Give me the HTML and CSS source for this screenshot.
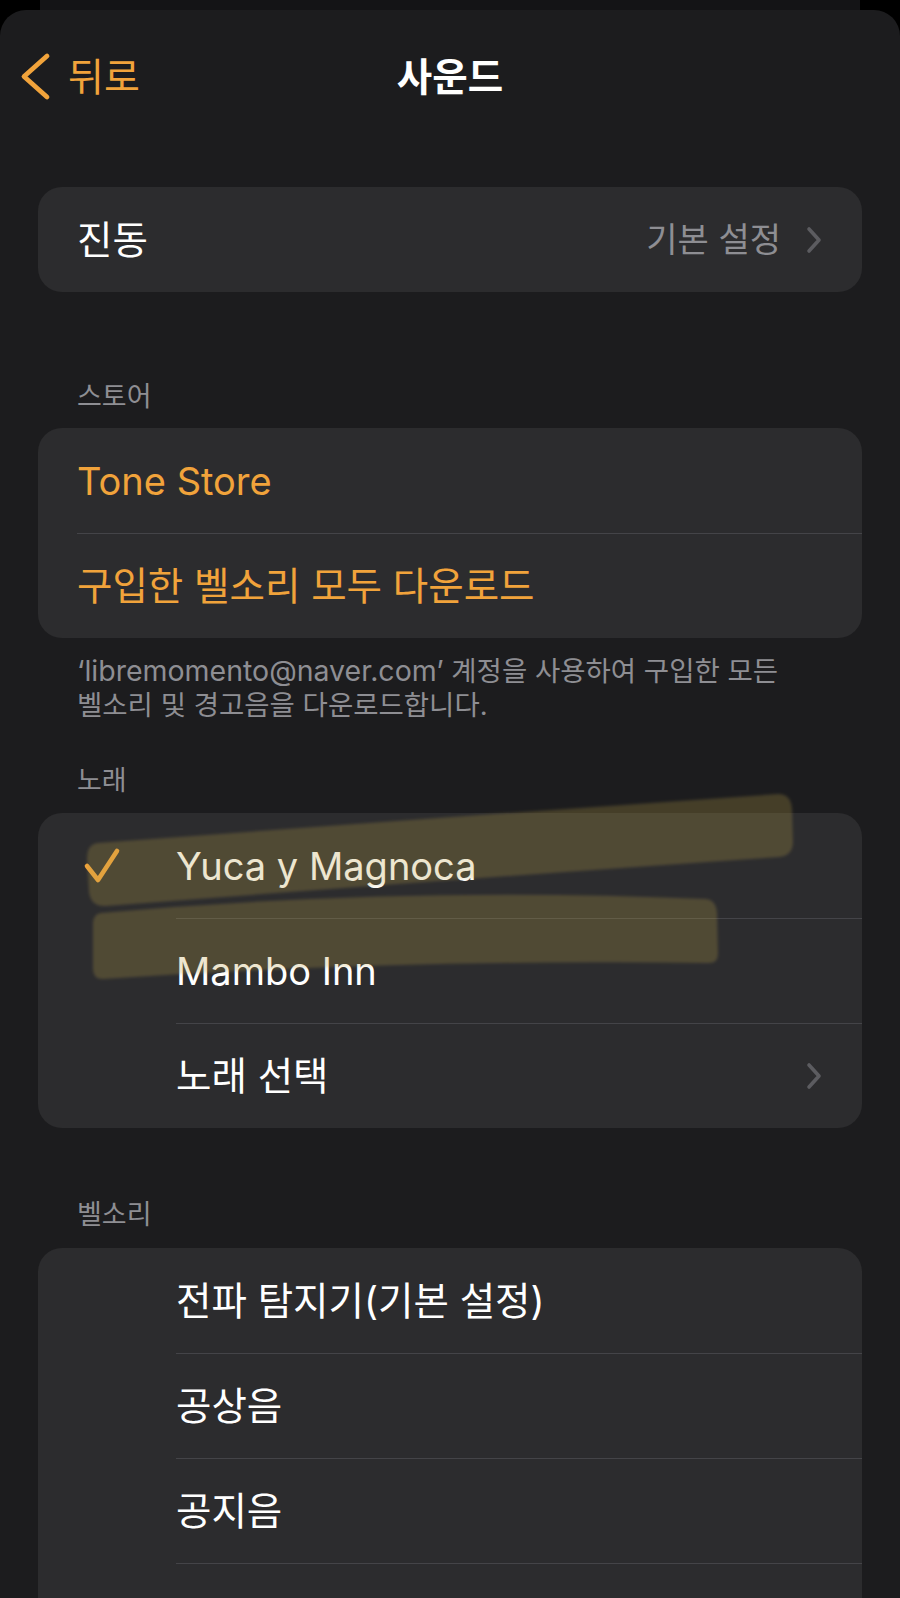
FILE: index.html
```html
<!DOCTYPE html>
<html lang="ko">
<head>
<meta charset="utf-8">
<title>사운드</title>
<link rel="stylesheet" href="styles.css">
</head>
<body>
<div class="backsheet"></div>
<main class="sheet">
  <header class="nav">
    <a class="back" href="#">
      <svg class="back-icon" width="32" height="50" viewBox="0 0 32 50" aria-hidden="true">
        <path d="M27 4 L4 24.5 L27 45" fill="none" stroke="#f1a33b" stroke-width="4.8" stroke-linecap="round" stroke-linejoin="round"/>
      </svg>
      <span>뒤로</span>
    </a>
    <h1 class="title">사운드</h1>
    <span></span>
  </header>

  <section class="group group-vib">
    <div class="card">
      <div class="row">
        <div class="lead"></div>
        <div class="cell">
          <span class="label">진동</span>
          <span class="value">기본 설정</span>
          <svg class="chev" width="18" height="28" viewBox="0 0 18 28" aria-hidden="true"><path d="M4 3 L14 14 L4 25" fill="none" stroke="#5c5c60" stroke-width="3.6" stroke-linecap="round" stroke-linejoin="round"/></svg>
        </div>
      </div>
    </div>
  </section>

  <section class="group group-store">
    <h2 class="group-header">스토어</h2>
    <div class="card">
      <div class="row">
        <div class="lead"></div>
        <div class="cell"><span class="label accent latin">Tone Store</span></div>
      </div>
      <div class="row">
        <div class="lead"></div>
        <div class="cell"><span class="label accent">구입한 벨소리 모두 다운로드</span></div>
      </div>
    </div>
    <p class="footer"><span class="footer-latin">‘libremomento@naver.com’</span> 계정을 사용하여 구입한 모든<br>벨소리 및 경고음을 다운로드합니다.</p>
  </section>

  <section class="group group-songs">
    <h2 class="group-header">노래</h2>
    <div class="card card-songs">
      <div class="row">
        <div class="lead lead-wide">
          <svg class="check" width="40" height="38" viewBox="0 0 40 38" aria-hidden="true"><path d="M4 19 L15 33 L34 4" fill="none" stroke="#f1a33b" stroke-width="4.6" stroke-linecap="round" stroke-linejoin="round"/></svg>
        </div>
        <div class="cell"><span class="label latin">Yuca y Magnoca</span></div>
      </div>
      <div class="row">
        <div class="lead lead-wide"></div>
        <div class="cell"><span class="label latin">Mambo Inn</span></div>
      </div>
      <div class="row">
        <div class="lead lead-wide"></div>
        <div class="cell">
          <span class="label">노래 선택</span>
          <svg class="chev" width="18" height="28" viewBox="0 0 18 28" aria-hidden="true"><path d="M4 3 L14 14 L4 25" fill="none" stroke="#5c5c60" stroke-width="3.6" stroke-linecap="round" stroke-linejoin="round"/></svg>
        </div>
      </div>
      <svg class="highlight" width="900" height="230" viewBox="0 0 900 230" aria-hidden="true">
        <defs>
          <filter id="soft" x="-5%" y="-20%" width="110%" height="140%"><feGaussianBlur stdDeviation="1.6"/></filter>
        </defs>
        <g fill="rgb(186,158,68)" fill-opacity="0.26" filter="url(#soft)">
          <path d="M98 70 Q 420 46 778 21 Q 791 21 792 36 L 793 70 Q 792 83 779 84 Q 430 108 106 133 Q 91 134 89 119 L 87 86 Q 87 71 98 70 Z"/>
          <path d="M101 140 Q 400 113 706 126 Q 716 127 717 140 L 718 181 Q 718 191 707 190 Q 400 186 103 206 Q 93 206 93 196 L 93 151 Q 93 141 101 140 Z"/>
        </g>
      </svg>
    </div>
  </section>

  <section class="group group-ring">
    <h2 class="group-header">벨소리</h2>
    <div class="card">
      <div class="row">
        <div class="lead lead-wide"></div>
        <div class="cell"><span class="label">전파 탐지기(기본 설정)</span></div>
      </div>
      <div class="row">
        <div class="lead lead-wide"></div>
        <div class="cell"><span class="label">공상음</span></div>
      </div>
      <div class="row">
        <div class="lead lead-wide"></div>
        <div class="cell"><span class="label">공지음</span></div>
      </div>
      <div class="row">
        <div class="lead lead-wide"></div>
        <div class="cell"></div>
      </div>
    </div>
  </section>
</main>
</body>
</html>
```

FILE: styles.css
```css
html, body {
  margin: 0;
  padding: 0;
  background: #000;
}

body {
  font-family: "Inter", "Noto Sans CJK KR", sans-serif;
  color: #fff;
  overflow: hidden;
  height: 1598px;
}

.backsheet {
  height: 10px;
  margin: 0 40px;
  background: #141416;
}

.sheet {
  background: #1c1c1e;
  border-radius: 26px 26px 0 0;
  height: 1588px;
  overflow: hidden;
}

.nav {
  height: 134px;
  display: grid;
  grid-template-columns: 1fr auto 1fr;
  align-items: center;
}

.back {
  display: flex;
  align-items: center;
  gap: 16px;
  padding-left: 20px;
  color: #f1a33b;
  text-decoration: none;
  font-size: 39px;
  line-height: 46px;
}

.back-icon {
  display: block;
}

.title {
  margin: 0;
  font-size: 38.5px;
  line-height: 46px;
  font-weight: 600;
  color: #fff;
}

.group {
  margin: 0 38px;
}

.group-vib {
  margin-top: 43px;
}

.group-store {
  margin-top: 90px;
}

.group-songs {
  margin-top: 44px;
}

.group-ring {
  margin-top: 72px;
}

.group-header {
  margin: 0 0 16px;
  padding-left: 39px;
  font-size: 27px;
  line-height: 30px;
  font-weight: 400;
  color: #8e8e93;
}

.group-songs .group-header {
  margin-bottom: 17px;
}

.group-ring .group-header {
  margin-bottom: 18px;
}

.card {
  background: #2c2c2e;
  border-radius: 24px;
  position: relative;
}

.group-ring .card {
  border-radius: 24px 24px 0 0;
}

.row {
  display: flex;
  height: 105px;
}

.lead {
  flex: 0 0 39px;
  display: flex;
  align-items: center;
}

.lead-wide {
  flex-basis: 138px;
}

.check {
  display: block;
  margin-left: 45px;
}

.cell {
  flex: 1;
  display: flex;
  align-items: center;
  border-top: 1px solid #444448;
  padding-right: 38px;
  min-width: 0;
}

.row:first-child .cell {
  border-top: none;
}

.label {
  font-size: 38.5px;
  line-height: 46px;
  flex: 1;
  white-space: nowrap;
}

.latin {
  font-size: 38px;
}

.accent {
  color: #f1a33b;
}

.value {
  font-size: 34px;
  line-height: 44px;
  color: #8e8e93;
  margin-right: 24px;
}

.chev {
  display: block;
  margin-right: 1px;
}

.footer {
  margin: 16px 0 0;
  padding-left: 39px;
  font-size: 27.5px;
  line-height: 34px;
  color: #8e8e93;
}

.footer-latin {
  font-size: 28.5px;
}

.highlight {
  position: absolute;
  left: -38px;
  top: -40px;
  pointer-events: none;
}
```
